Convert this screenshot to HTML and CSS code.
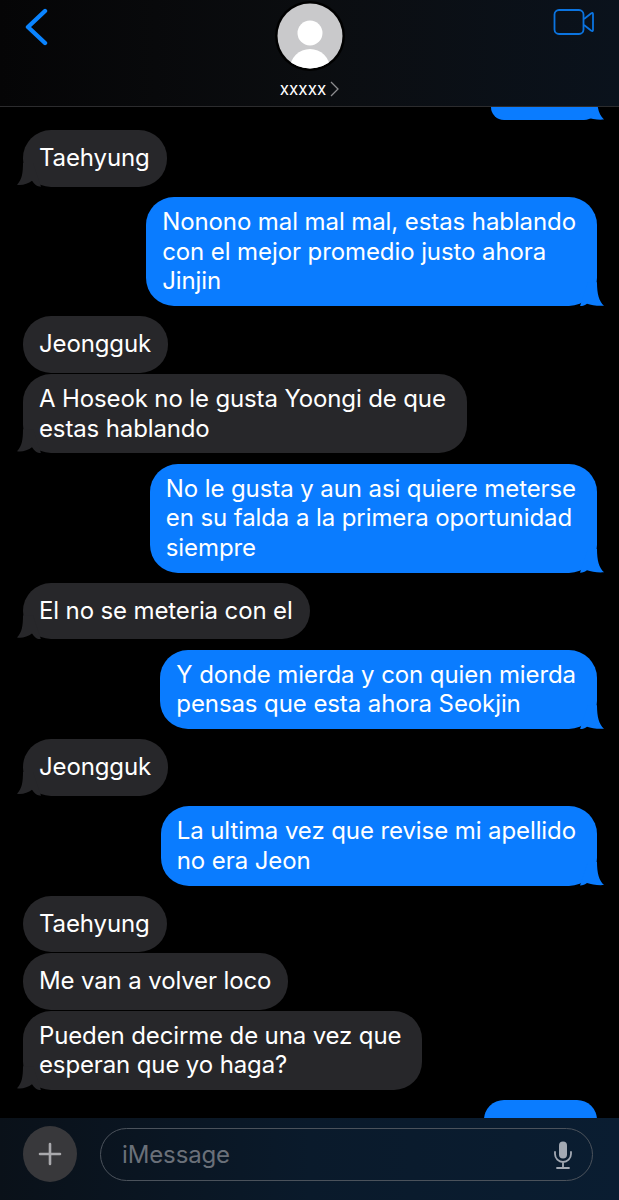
FILE: index.html
```html
<!DOCTYPE html>
<html lang="es">
<head>
  <meta charset="UTF-8" />
  <meta name="viewport" content="width=device-width, initial-scale=1" />
  <title>Mensajes</title>
  <link rel="stylesheet" href="styles.css">
</head>
<body>
  <div class="phone">
    <header class="top-bar">
      <svg class="back-icon" width="24" height="38" viewBox="0 0 24 38">
        <path d="M21 3 L4 19 L21 35" fill="none" stroke="#0a84ff" stroke-width="4.4" stroke-linecap="round" stroke-linejoin="round"/>
      </svg>
      <div class="contact">
        <svg class="avatar" width="70" height="70" viewBox="0 0 70 70">
          <defs><clipPath id="avatar-clip"><circle cx="35" cy="35" r="32.5"/></clipPath></defs>
          <circle cx="35" cy="35" r="35" fill="#000"/>
          <circle cx="35" cy="35" r="32.5" fill="#c9c9cb"/>
          <g clip-path="url(#avatar-clip)" fill="#fff">
            <ellipse cx="35" cy="32" rx="12.5" ry="12.5"/>
            <ellipse cx="35" cy="68" rx="20" ry="20"/>
          </g>
        </svg>
        <div class="contact-name">
          <span>xxxxx</span>
          <svg width="9" height="16" viewBox="0 0 9 16">
            <path d="M1 1 L8 8 L1 15" fill="none" stroke="#8d8d90" stroke-width="1.3"/>
          </svg>
        </div>
      </div>
      <svg class="video-icon" width="42" height="28" viewBox="0 0 42 28">
        <rect x="1.5" y="2" width="29" height="24" rx="4.5" fill="none" stroke="#0b74e0" stroke-width="1.8"/>
        <path d="M31 11 L38 5.5 Q40 4 40 6 V22 Q40 24 38 22.5 L31 17" fill="none" stroke="#0b74e0" stroke-width="1.8" stroke-linejoin="round"/>
      </svg>
    </header>

    <main class="messages">
      <div class="bubble sent tail cut-top"></div>
      <div class="bubble received tail single">Taehyung</div>
      <div class="bubble sent tail">Nonono mal mal mal, estas hablando<br>con el mejor promedio justo ahora<br>Jinjin</div>
      <div class="bubble received single">Jeongguk</div>
      <div class="bubble received tail next">A Hoseok no le gusta Yoongi de que<br>estas hablando</div>
      <div class="bubble sent tail">No le gusta y aun asi quiere meterse<br>en su falda a la primera oportunidad<br>siempre</div>
      <div class="bubble received tail single">El no se meteria con el</div>
      <div class="bubble sent tail">Y donde mierda y con quien mierda<br>pensas que esta ahora Seokjin</div>
      <div class="bubble received tail single">Jeongguk</div>
      <div class="bubble sent tail">La ultima vez que revise mi apellido<br>no era Jeon</div>
      <div class="bubble received single">Taehyung</div>
      <div class="bubble received next single">Me van a volver loco</div>
      <div class="bubble received tail next">Pueden decirme de una vez que<br>esperan que yo haga?</div>
      <div class="bubble sent cut-bottom"></div>
    </main>

    <footer class="input-bar">
      <div class="plus-button">
        <svg width="24" height="24" viewBox="0 0 24 24">
          <path d="M12 2 V22 M2 12 H22" stroke="#a9a9ad" stroke-width="2.6" stroke-linecap="round"/>
        </svg>
      </div>
      <div class="input-box">
        <span class="placeholder">iMessage</span>
        <svg width="20" height="28" viewBox="0 0 20 28">
          <rect x="6" y="0.5" width="8" height="17" rx="4" fill="#a3a9b3"/>
          <path d="M2 11 V13 A8 8 0 0 0 18 13 V11 M10 21 V26 M4 27 H16" fill="none" stroke="#a3a9b3" stroke-width="1.8" stroke-linecap="round"/>
        </svg>
      </div>
    </footer>
  </div>
</body>
</html>
```

FILE: styles.css
```css
* {
  box-sizing: border-box;
}
body {
  margin: 0;
  background: #000;
  font-family: Inter, "Liberation Sans", sans-serif;
  color: #fff;
}
.phone {
  width: 619px;
  height: 1200px;
  display: flex;
  flex-direction: column;
  overflow: hidden;
}

/* barra de arriba */
.top-bar {
  height: 107px;
  flex: none;
  display: grid;
  grid-template-columns: 1fr auto 1fr;
  align-items: start;
  padding: 0 24px 0 24px;
  background: linear-gradient(90deg, #050506 0%, #0b0d10 50%, #0a121c 100%);
  border-bottom: 1px solid #2c2c2e;
}
.back-icon {
  margin-top: 8px;
}
.contact {
  display: flex;
  flex-direction: column;
  align-items: center;
  padding-top: 1px;
}
.contact-name {
  display: flex;
  align-items: center;
  gap: 4px;
  margin-top: 8px;
  font-size: 17px;
  line-height: 20px;
}
.video-icon {
  justify-self: end;
  margin-top: 8px;
}

/* mensajes */
.messages {
  flex: 1;
  min-height: 0;
  display: flex;
  flex-direction: column;
  overflow: hidden;
}
.bubble {
  position: relative;
  flex: none;
  min-height: 56.5px;
  margin-top: 10.2px;
  padding: 10px 21px 10px 16px;
  border-radius: 28px;
  font-size: 24px;
  letter-spacing: -0.13px;
  line-height: 29.75px;
  white-space: nowrap;
}
.bubble.next {
  margin-top: 1px;
}
.bubble.single {
  padding-top: 0;
  padding-bottom: 0;
  padding-right: 17px;
  line-height: 56.5px;
}
.received {
  align-self: flex-start;
  margin-left: 23px;
  background: #27272a;
}
.sent {
  align-self: flex-end;
  margin-right: 22px;
  letter-spacing: -0.09px;
  background: #0a7cff;
}
.tail::after {
  content: "";
  position: absolute;
  bottom: 0;
  width: 24px;
  height: 24px;
}
.sent.tail::after {
  right: -7px;
  background: #0a7cff;
  clip-path: path("M8 0 H17 C17 12 19 19 24 23.5 C18 24 11 23 7 21.5 C5 23 3 24 0 24 Z");
}
.received.tail::after {
  left: -6px;
  background: #27272a;
  clip-path: path("M16 0 H6 C6 10 5 17 0 22 C5 23 11 21 15 18 C17 21 20 24 24 24 Z");
}
.cut-top {
  width: 106px;
  min-height: 13px;
  height: 13px;
  margin-top: 0;
  padding: 0;
  border-radius: 0 0 28px 28px;
}
.cut-bottom {
  width: 113px;
  min-height: 40px;
}

/* barra de abajo */
.input-bar {
  height: 82px;
  flex: none;
  display: flex;
  align-items: flex-start;
  gap: 23px;
  padding: 8px 26px 0 23px;
  background: linear-gradient(90deg, #0a1119 0%, #0a1a2b 50%, #0a1d31 100%);
}
.plus-button {
  width: 54px;
  height: 56px;
  flex: none;
  display: flex;
  align-items: center;
  justify-content: center;
  border-radius: 50%;
  background: #38383b;
}
.input-box {
  flex: 1;
  height: 53px;
  margin-top: 2px;
  display: flex;
  align-items: center;
  justify-content: space-between;
  padding: 0 19px 0 21px;
  border: 1.5px solid #4b525b;
  border-radius: 27px;
}
.placeholder {
  font-size: 24px;
  letter-spacing: -0.13px;
  color: #6a7079;
}
```
